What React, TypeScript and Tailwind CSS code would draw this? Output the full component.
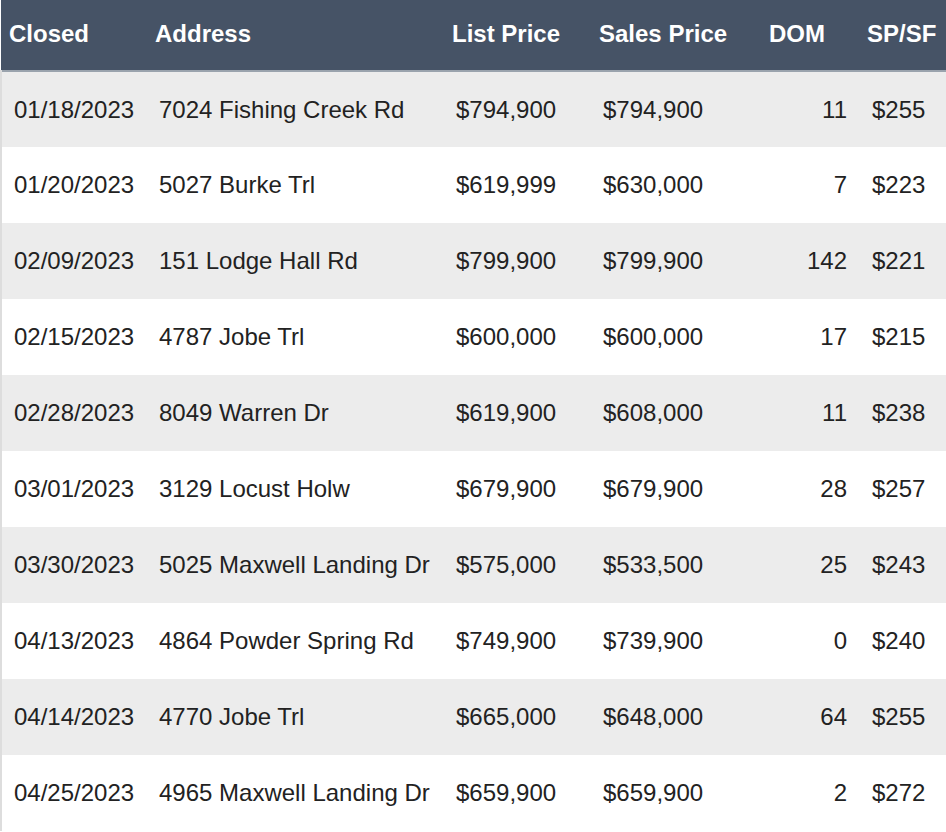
const rows = [
  ["01/18/2023", "7024 Fishing Creek Rd", "$794,900", "$794,900", "11", "$255"],
  ["01/20/2023", "5027 Burke Trl", "$619,999", "$630,000", "7", "$223"],
  ["02/09/2023", "151 Lodge Hall Rd", "$799,900", "$799,900", "142", "$221"],
  ["02/15/2023", "4787 Jobe Trl", "$600,000", "$600,000", "17", "$215"],
  ["02/28/2023", "8049 Warren Dr", "$619,900", "$608,000", "11", "$238"],
  ["03/01/2023", "3129 Locust Holw", "$679,900", "$679,900", "28", "$257"],
  ["03/30/2023", "5025 Maxwell Landing Dr", "$575,000", "$533,500", "25", "$243"],
  ["04/13/2023", "4864 Powder Spring Rd", "$749,900", "$739,900", "0", "$240"],
  ["04/14/2023", "4770 Jobe Trl", "$665,000", "$648,000", "64", "$255"],
  ["04/25/2023", "4965 Maxwell Landing Dr", "$659,900", "$659,900", "2", "$272"],
];

export default function App() {
  return (
    <div className="w-[946px] h-[832px] overflow-hidden bg-white" style={{ fontFamily: '"Liberation Sans", Arial, sans-serif' }}>
      <table className="table-fixed border-collapse w-[946px] text-[24px]">
        <colgroup>
          <col className="w-[146px]" />
          <col className="w-[297px]" />
          <col className="w-[147px]" />
          <col className="w-[170px]" />
          <col className="w-[98px]" />
          <col className="w-[88px]" />
        </colgroup>
        <thead>
          <tr className="h-[71px] bg-[#465366] text-white font-bold text-left border-b-2 border-[#9aa3ad]">
            <th className="pl-2 pb-[2px]">Closed</th>
            <th className="pl-2 pb-[2px]">Address</th>
            <th className="pl-2 pb-[2px]">List Price</th>
            <th className="pl-2 pb-[2px]">Sales Price</th>
            <th className="pl-2 pb-[2px]">DOM</th>
            <th className="pl-2 pb-[2px] whitespace-nowrap">SP/SF</th>
          </tr>
        </thead>
        <tbody>
          {rows.map((r, i) => (
            <tr key={i} className={`h-[76px] text-[#222222] ${i % 2 === 0 ? "bg-[#ececec]" : "bg-white"}`}>
              <td className="pl-3 border-l-2 border-[#dddddd] whitespace-nowrap">{r[0]}</td>
              <td className="pl-3 whitespace-nowrap">{r[1]}</td>
              <td className="pl-3">{r[2]}</td>
              <td className="pl-3">{r[3]}</td>
              <td className="pr-3 text-right">{r[4]}</td>
              <td className="pl-[13px]">{r[5]}</td>
            </tr>
          ))}
        </tbody>
      </table>
    </div>
  );
}
